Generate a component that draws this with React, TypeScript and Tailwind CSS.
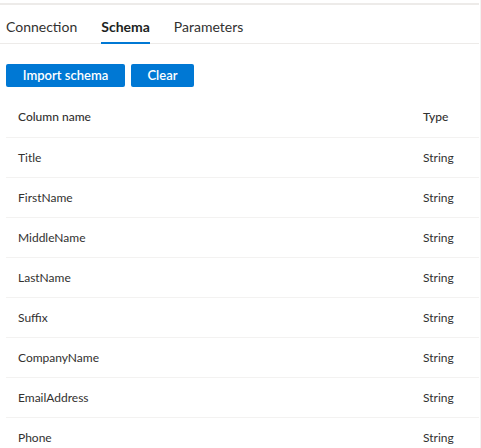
import React from "react";

const rows = [
  "Title",
  "FirstName",
  "MiddleName",
  "LastName",
  "Suffix",
  "CompanyName",
  "EmailAddress",
  "Phone",
];

const tabs = ["Connection", "Schema", "Parameters"];

export default function App() {
  return (
    <div
      className="relative w-[481px] h-[448px] overflow-hidden bg-white text-[#323130]"
      style={{ fontFamily: 'Lato, "Liberation Sans", sans-serif' }}
    >
      {/* top strip */}
      <div className="mt-[3px] h-[2px] w-[479px] bg-[#edebe9]" />

      {/* tabs */}
      <div className="flex h-[39px] w-[479px] items-center gap-[24px] border-b border-[#edebe9] pl-[6px] pt-[5px]">
        {tabs.map((t) => (
          <div key={t} className="relative flex h-full items-center">
            <span
              className={
                t === "Schema"
                  ? "text-[14px] font-bold text-[#201f1e]"
                  : "text-[14px] text-[#323130]"
              }
            >
              {t}
            </span>
            {t === "Schema" && (
              <div className="absolute bottom-[-1px] left-0 right-0 h-[2px] bg-[#0078d4]" />
            )}
          </div>
        ))}
      </div>

      {/* buttons */}
      <div className="mt-[20px] flex gap-[6px] pl-[6px]">
        <button className="flex h-[23px] w-[119px] items-center justify-center rounded-[2px] bg-[#0078d4] text-[13px] font-semibold text-white">
          Import schema
        </button>
        <button className="flex h-[23px] w-[63px] items-center justify-center rounded-[2px] bg-[#0078d4] text-[13px] font-semibold text-white">
          Clear
        </button>
      </div>

      {/* table */}
      <div className="ml-[6px] mt-[10px] w-[473px] text-[12px]">
        <div className="grid h-[40px] grid-cols-[1fr_68px] items-center">
          <div className="pl-[12px] font-medium text-[#323130]">Column name</div>
          <div className="pl-[12px] font-medium text-[#323130]">Type</div>
        </div>
        {rows.map((r) => (
          <div
            key={r}
            className="grid h-[40px] grid-cols-[1fr_68px] items-center border-t border-[#f3f2f1]"
          >
            <div className="pl-[12px]">{r}</div>
            <div className="pl-[12px]">String</div>
          </div>
        ))}
      </div>

      {/* right edge */}
      <div className="absolute right-0 top-0 h-full w-px bg-[#f3f2f1]" />
    </div>
  );
}
